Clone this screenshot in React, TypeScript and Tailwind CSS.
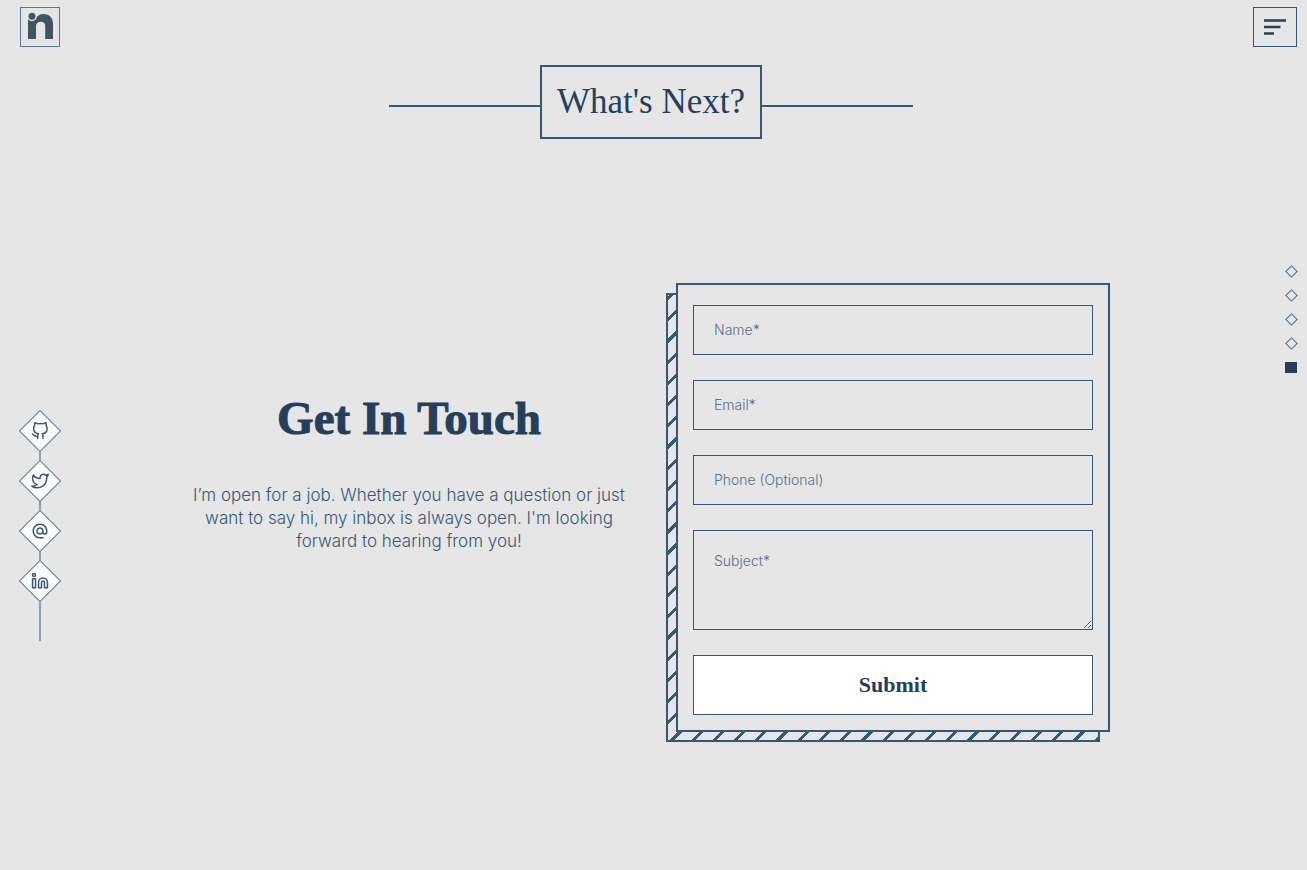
import React from "react";
import { FiGithub, FiTwitter, FiLinkedin } from "react-icons/fi";
import { MdAlternateEmail } from "react-icons/md";

const socials = [
  { label: "GitHub", href: "#github", Icon: FiGithub },
  { label: "Twitter", href: "#twitter", Icon: FiTwitter },
  { label: "Email", href: "#email", Icon: MdAlternateEmail },
  { label: "LinkedIn", href: "#linkedin", Icon: FiLinkedin },
];

const sections = ["Home", "About", "Work", "Skills", "Contact"];

const fields = [
  { id: "name", type: "text", placeholder: "Name*" },
  { id: "email", type: "email", placeholder: "Email*" },
  { id: "phone", type: "tel", placeholder: "Phone (Optional)" },
];

function Logo() {
  return (
    <a
      href="#home"
      aria-label="Home"
      className="flex h-10 w-10 items-center justify-center border border-[#55789b]"
    >
      <svg viewBox="0 0 40 40" className="h-10 w-10 shrink-0" fill="#405560">
        <path d="M8 12 H14 L16 10.5 C18.5 8 21 7 23.5 7 C29.5 7 33 11 33 17 V32 H25.2 V19 C25.2 16.2 23.6 14.8 20.8 14.8 C17.6 14.8 16 16.6 16 19.5 V32 H8 Z" />
        <circle cx="12" cy="9.3" r="4.2" stroke="#e6e6e6" strokeWidth="1.4" />
      </svg>
    </a>
  );
}

function MenuButton() {
  return (
    <button
      type="button"
      aria-label="Open menu"
      className="flex h-10 w-11 items-center justify-center border border-[#355878]"
    >
      <svg viewBox="0 0 44 40" className="h-10 w-11 shrink-0" stroke="#243f5b" strokeWidth="2.6">
        <path d="M11 13.5H33M11 20H27.5M11 26.5H21" />
      </svg>
    </button>
  );
}

function SocialRail() {
  return (
    <nav aria-label="Social links" className="fixed top-[410px] left-[19px] flex flex-col items-center">
      {socials.map(({ label, href, Icon }, i) => (
        <React.Fragment key={label}>
          {i > 0 && <span className="h-2 w-0.5 bg-[#8ba0b3]" />}
          <a href={href} aria-label={label} className="flex size-[42px] items-center justify-center">
            <span className="flex size-[30px] shrink-0 rotate-45 items-center justify-center border border-[#55789b] bg-white">
              <Icon className="size-[18px] -rotate-45 text-[#355878]" />
            </span>
          </a>
        </React.Fragment>
      ))}
      <span className="h-[39px] w-0.5 bg-[#8ba0b3]" />
    </nav>
  );
}

function SectionDots() {
  return (
    <nav aria-label="Sections" className="fixed top-[265px] right-2.5 flex flex-col gap-3">
      {sections.map((name, i) => (
        <a key={name} href={"#" + name.toLowerCase()} aria-label={name} className="flex size-3 items-center justify-center">
          {i === sections.length - 1 ? (
            <span className="h-[11px] w-3 bg-[#243f5b]" />
          ) : (
            <span className="size-[9px] shrink-0 rotate-45 border border-[#48698a]" />
          )}
        </a>
      ))}
    </nav>
  );
}

function ContactForm() {
  const control =
    "block w-full rounded-none border border-[#355878] bg-transparent px-5 font-['Inter',sans-serif] text-sm font-light text-[#355878] outline-none placeholder:text-[#557089]";
  return (
    <div className="relative w-full max-w-[434px]">
      <div
        aria-hidden="true"
        className="absolute top-2.5 right-2.5 -bottom-2.5 -left-2.5 border-2 border-[#355878] bg-[repeating-linear-gradient(135deg,transparent_0px,transparent_1px,#355878_1px,#355878_4px,transparent_4px,transparent_15px)]"
      />
      <form
        onSubmit={(e) => e.preventDefault()}
        className="relative flex flex-col gap-[25px] border-2 border-[#355878] bg-[#e6e6e6] px-[15px] pt-5 pb-[15px]"
      >
        {fields.map((f) => (
          <input
            key={f.id}
            id={f.id}
            type={f.type}
            aria-label={f.placeholder}
            placeholder={f.placeholder}
            className={control + " h-[50px] pb-0.5"}
          />
        ))}
        <textarea id="subject" aria-label="Subject*" placeholder="Subject*" className={control + " h-[100px] py-5"} />
        <button
          type="submit"
          className="h-[60px] w-full border border-[#355878] bg-white pb-0.5 font-['Liberation_Serif',serif] text-[22px] font-bold text-[#243f5b]"
        >
          Submit
        </button>
      </form>
    </div>
  );
}

export default function App() {
  return (
    <div className="min-h-screen bg-[#e6e6e6] text-[#243f5b]">
      <header className="flex justify-between pt-[7px] pr-2.5 pl-5">
        <Logo />
        <MenuButton />
      </header>
      <SocialRail />
      <SectionDots />
      <main>
        <div className="flex items-center justify-center pt-[18px] pr-[5px]">
          <span className="mt-2 h-0.5 w-[151px] bg-[#355878]" />
          <h1 className="border-2 border-[#355878] px-[15px] py-[15px] font-['Liberation_Serif',serif] text-[35px] leading-10">
            What's Next?
          </h1>
          <span className="mt-2 h-0.5 w-[151px] bg-[#355878]" />
        </div>
        <section className="mx-auto mt-36 flex max-w-[929px] items-center justify-between pr-2">
          <div className="w-[440px] pb-[74px] text-center">
            <h2 className="font-['Liberation_Serif',serif] text-[47px] leading-[60px] font-bold [-webkit-text-stroke:1px_#243f5b]">
              Get In Touch
            </h2>
            <p className="mt-9 font-['Inter',sans-serif] text-[17px] leading-[23px] font-light text-[#355878]">
              I’m open for a job. Whether you have a question or just want to say hi, my inbox is always open. I'm
              looking forward to hearing from you!
            </p>
          </div>
          <ContactForm />
        </section>
      </main>
    </div>
  );
}
